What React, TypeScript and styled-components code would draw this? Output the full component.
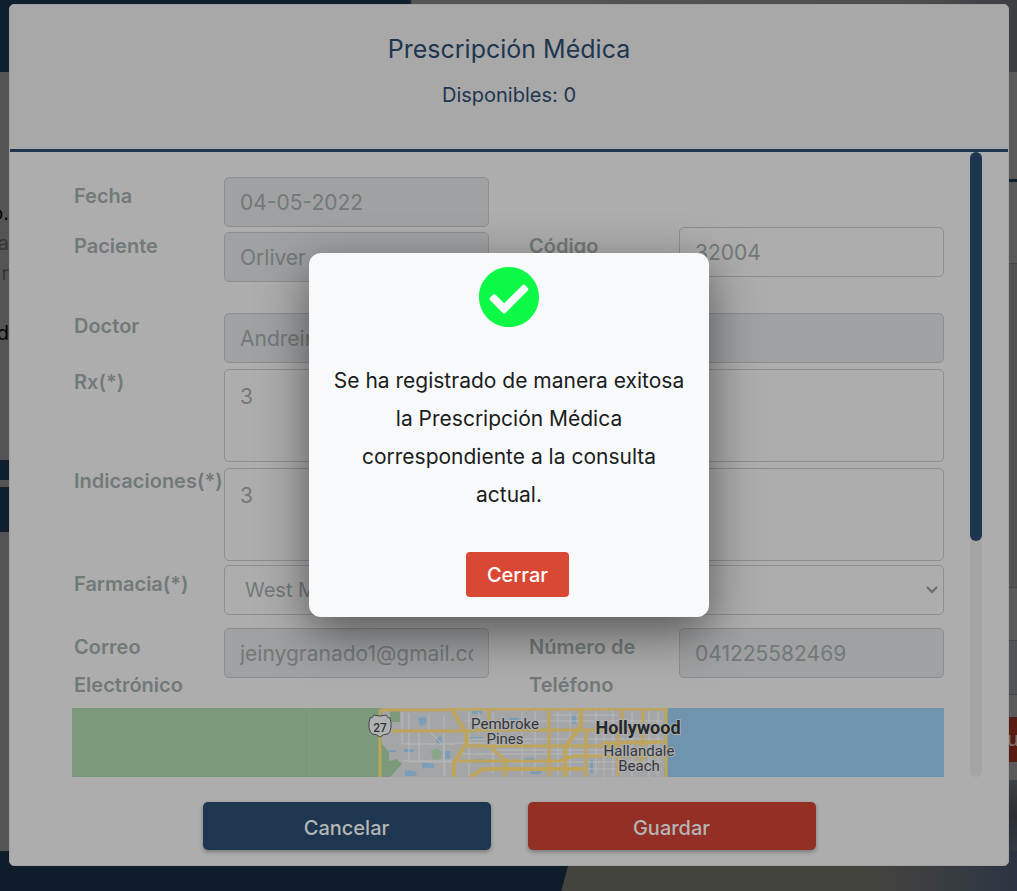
import React from "react";
import styled, { createGlobalStyle } from "styled-components";
import { FaCheckCircle } from "react-icons/fa";

const navy = "#1e364f";
const red = "#932f25";
const muted = "#717a79";
const line = "#8c8f92";

const GlobalStyle = createGlobalStyle`
  * { box-sizing: border-box; }
  body {
    margin: 0;
    font-family: Inter, "Noto Sans", sans-serif;
    font-size: 20px;
    background: #555555;
  }
  button, input, select, textarea { font: inherit; }
  h1, p { margin: 0; }
`;

/* Page behind the dialogs */

const Page = styled.div`
  display: grid;
  grid-template-rows: 72px 1fr 40px;
  height: 100vh;
  min-height: 891px;
  overflow: hidden;
`;

const PageTop = styled.header`
  background:
    linear-gradient(90deg, #101f2d 0 410px, transparent 412px),
    linear-gradient(90deg, #575553 0 50%, #4c4e50 90%, #3c3e41);
`;

const PageMain = styled.main`
  display: flex;
  justify-content: space-between;
  background: #545454;
`;

const PageBottom = styled.footer`
  background:
    linear-gradient(105deg, #0f1c29 0 552px, transparent 553px),
    linear-gradient(90deg, #44443f 0 86%, #373c42 94%, #2c3443);
`;

const LeftRail = styled.div`
  display: flex;
  flex-direction: column;
  width: 9px;
  padding-top: 126px;
  overflow: hidden;
`;

const RailText = styled.span<{ $soft?: boolean; $after?: number }>`
  display: flex;
  justify-content: flex-end;
  height: 30px;
  line-height: 30px;
  margin-bottom: ${(p) => p.$after ?? 0}px;
  color: ${(p) => (p.$soft ? "#343638" : "#050505")};
`;

const RailBlock = styled.div<{ $height: number }>`
  flex: none;
  height: ${(p) => p.$height}px;
  margin-bottom: 7px;
  background: #101f2d;
`;

const RightRail = styled.div`
  display: flex;
  flex-direction: column;
  width: 8px;
  background: #5a5a5a;
  overflow: hidden;
`;

const RailSection = styled.div<{ $height: number; $rule: string; $size?: number; $fill?: string }>`
  flex: none;
  height: ${(p) => p.$height}px;
  border-bottom: ${(p) => p.$size ?? 1}px solid ${(p) => p.$rule};
  background: ${(p) => p.$fill ?? "transparent"};
`;

const RailButton = styled.div`
  display: flex;
  justify-content: center;
  flex: none;
  height: 45px;
  line-height: 45px;
  margin: 22px 0 18px;
  background: #571c14;
  color: #85706d;
`;

const RailPhoto = styled.div`
  flex: 1;
  background: linear-gradient(#3e4244, #2b2e32 50%, #343a45);
`;

/* Prescription dialog */

const Layer = styled.div`
  position: absolute;
  inset: 0;
  padding: 4px 8px 25px 9px;
`;

const Dialog = styled.section`
  display: flex;
  flex-direction: column;
  background: #adadad;
  border: 1px solid #a2a2a2;
  border-radius: 5px;
`;

const DialogHeader = styled.header`
  padding: 21px 0 31px;
  background: #a8a8a8;
  border-bottom: 3px solid ${navy};
  border-radius: 4px 4px 0 0;
  color: ${navy};
  line-height: 46px;
  text-align: center;
`;

const Title = styled.h1`
  font-size: 25px;
  font-weight: 400;
`;

const DialogBody = styled.div`
  display: flex;
  gap: 26px;
  padding: 0 26px 0 62px;
`;

const Form = styled.form`
  flex: 1;
  padding-top: 25px;
`;

const ScrollTrack = styled.div`
  flex: none;
  width: 12px;
  height: 625px;
  border-radius: 6px;
  background: #a4a4a4;
`;

const ScrollThumb = styled.div`
  height: 389px;
  border-radius: 6px;
  background: ${navy};
`;

const Row = styled.div<{ $after?: number }>`
  display: grid;
  grid-template-columns: 1fr 1fr;
  gap: 38px;
  margin-bottom: ${(p) => p.$after ?? 0}px;
`;

const Field = styled.div<{ $wide?: boolean; $drop?: number }>`
  display: grid;
  grid-template-columns: 152px minmax(0, 1fr);
  align-items: start;
  grid-column: ${(p) => (p.$wide ? "1 / -1" : "auto")};

  > :last-child {
    margin-top: ${(p) => p.$drop ?? 0}px;
  }
`;

const Label = styled.label`
  padding-left: 2px;
  color: ${muted};
  font-weight: 600;
  line-height: 38px;
`;

const Input = styled.input`
  width: 100%;
  height: 50px;
  padding: 0 15px;
  border: 1px solid ${line};
  border-radius: 5px;
  background: #adadad;
  color: ${muted};
  font-size: 21px;
  outline: none;

  &:disabled {
    background: #9fa1a3;
    color: ${muted};
    opacity: 1;
  }
`;

const TextArea = styled.textarea`
  display: block;
  width: 100%;
  height: 93px;
  padding: 8px 15px;
  border: 1px solid ${line};
  border-radius: 5px;
  background: #adadad;
  color: ${muted};
  font-size: 21px;
  line-height: 38px;
  resize: none;
  outline: none;
`;

const SelectBox = styled.div`
  display: grid;
  align-items: center;

  > * {
    grid-area: 1 / 1;
  }

  svg {
    justify-self: end;
    margin-right: 6px;
    pointer-events: none;
  }
`;

const Select = styled.select`
  appearance: none;
  width: 100%;
  height: 50px;
  padding: 0 20px;
  border: 1px solid ${line};
  border-radius: 5px;
  background: #adadad;
  color: ${muted};
  outline: none;
`;

const MapView = styled.svg`
  display: block;
  width: 100%;
  height: 69px;
  font-family: Roboto, sans-serif;
`;

const DialogFooter = styled.footer`
  display: flex;
  justify-content: center;
  gap: 37px;
  padding: 25px 20px 15px;
`;

const ActionButton = styled.button<{ $color: string }>`
  flex: 0 1 288px;
  height: 48px;
  padding: 4px 6px 0;
  border: 0;
  border-radius: 5px;
  background: ${(p) => p.$color};
  color: #b4b6b8;
  font-weight: 500;
  box-shadow: 0 2px 4px rgba(0, 0, 0, 0.3);
`;

/* Confirmation */

const AlertLayer = styled.div`
  position: absolute;
  inset: 0;
  display: flex;
  align-items: center;
  justify-content: center;
  padding: 0 0 21px 1px;
`;

const Alert = styled.div`
  display: flex;
  flex-direction: column;
  align-items: center;
  width: 400px;
  padding: 13px 20px 20px;
  border-radius: 12px;
  background: #f8f9fb;
  box-shadow: 0 16px 48px rgba(0, 0, 0, 0.5);
`;

const AlertText = styled.p`
  margin: 34px 0 38px;
  color: #1b1d20;
  font-size: 21px;
  line-height: 38px;
  text-align: center;
`;

const AlertActions = styled.div`
  padding-left: 17px;
`;

const CloseButton = styled.button`
  width: 103px;
  height: 45px;
  padding: 0;
  border: 0;
  border-radius: 4px;
  background: #d94835;
  color: #ffffff;
  font-weight: 500;
`;

function CoastMap() {
  return (
    <MapView viewBox="0 0 872 69" preserveAspectRatio="xMidYMid slice" role="img" aria-label="Mapa">
      <rect x="-900" width="2672" height="69" fill="#7a9a7b" />
      <path d="M238 0V69" stroke="#82a083" />
      <path d="M300 0H596L592 69H317V44L310 36V0Z" fill="#a3a5a7" />
      <path d="M596 0H1772V69H595L594 40Z" fill="#7094ae" />
      <path d="M318 2h10v12h-10zM312 55l12-4 6 5-12 13h-6z" fill="#7a9a7b" />
      <path d="M359 43l6-3 5 4-1 7-8 1zM540 38h8v8h-8z" fill="#89a58a" />
      <g fill="#7b9db8">
        <path d="M346 10l8-1v7l-6 2zM332 41h10v3h-10zM364 31l5-3 1 7-5 2zM333 62l10 1 2 5h-12zM350 54l12 2v4h-12zM373 43h5v8h-5zM398 29h14v2h-14zM437 10h10v4h-10zM453 50h9v5h-9zM459 60h10v6h-10zM500 6h4v10h-4zM518 52h3v13h-3zM403 51h9v4h-9zM400 3h10v3h-10zM317 42h7v2h-7z" />
      </g>
      <g fill="none" stroke="#b7b8b8" strokeWidth="1">
        <path d="M330 4V36H383M337 5V54H386M347 25V53M357 5V23L372 38L373 68M372 8V68M383 35H460M397 4V68M407 4V25M421 5V65M450 4V67M463 3V64M486 3V67M498 3V67M524 3V67M532 20V69M541 2V69M560 2V69M577 3V69M586 3V69" />
        <path d="M393 13H590M399 31H590M390 46H592M430 54H590M440 61H590M330 53H380M481 7H545M420 42H590" />
      </g>
      <g fill="none" stroke="#bfa55b" strokeWidth="3">
        <path d="M308 2V69M308 2H375M320 23H395L407 22H594M396 38H544L552 34H592M386 53H488L502 48H592M417 2V38L433 52V69M477 0V69M514 22V69M550 0V15L546 26V68M571 0V45L565 62M594 0V69M375 1H594M530 35H585" />
        <path d="M379 0L394 25L395 34L382 55V69M509 0V18L493 39V69M398 69L411 61H512" strokeWidth="4" />
      </g>
      <path d="M298 10q3 0 4-3q6 2 12 0q1 3 4 3q3 11-2 16q-5 0-8 3q-3-3-8-3q-5-5-2-16z" fill="#b1b2b2" stroke="#45494d" strokeWidth="1" />
      <text x="308" y="24" textAnchor="middle" fontSize="12" fontWeight="500" fill="#303438">27</text>
      <g fill="#33373b" stroke="#acaeb0" strokeWidth="2" paintOrder="stroke" fontSize="15" textAnchor="middle">
        <text x="433" y="21">Pembroke</text>
        <text x="433" y="36">Pines</text>
        <text x="566" y="26" fontSize="18" fontWeight="700" fill="#25282b">Hollywood</text>
        <text x="567" y="48">Hallandale</text>
        <text x="567" y="63">Beach</text>
      </g>
    </MapView>
  );
}

export default function App() {
  return (
    <>
      <GlobalStyle />
      <Page aria-hidden="true">
        <PageTop />
        <PageMain>
          <LeftRail>
            <RailText>o.</RailText>
            <RailText $soft>la</RailText>
            <RailText $soft $after={30}>r</RailText>
            <RailText $after={112}>d</RailText>
            <RailBlock $height={20} />
            <RailBlock $height={45} />
          </LeftRail>
          <RightRail>
            <RailSection $height={110} $rule="#101f2d" $size={3} />
            <RailSection $height={82} $rule="#454647" />
            <RailSection $height={324} $rule="#454647" $fill="#525252" />
            <RailSection $height={53} $rule="#454647" />
            <RailSection $height={54} $rule="#454647" $fill="#515356" />
            <RailButton>u</RailButton>
            <RailPhoto />
          </RightRail>
        </PageMain>
        <PageBottom />
      </Page>

      <Layer>
        <Dialog role="dialog" aria-labelledby="title">
          <DialogHeader>
            <Title id="title">Prescripción Médica</Title>
            <p>Disponibles: 0</p>
          </DialogHeader>
          <DialogBody>
            <Form>
              <Row>
                <Field>
                  <Label htmlFor="fecha">Fecha</Label>
                  <Input id="fecha" defaultValue="04-05-2022" disabled />
                </Field>
              </Row>
              <Row $after={25}>
                <Field $drop={5}>
                  <Label htmlFor="paciente">Paciente</Label>
                  <Input id="paciente" defaultValue="Orliver" disabled />
                </Field>
                <Field>
                  <Label htmlFor="codigo">Código</Label>
                  <Input id="codigo" defaultValue="32004" />
                </Field>
              </Row>
              <Row>
                <Field $wide $drop={6}>
                  <Label htmlFor="doctor">Doctor</Label>
                  <Input id="doctor" defaultValue="Andreina" disabled />
                </Field>
              </Row>
              <Row>
                <Field $wide $drop={6}>
                  <Label htmlFor="rx">Rx(*)</Label>
                  <TextArea id="rx" defaultValue="3" />
                </Field>
              </Row>
              <Row $after={4}>
                <Field $wide $drop={6}>
                  <Label htmlFor="indicaciones">Indicaciones(*)</Label>
                  <TextArea id="indicaciones" defaultValue="3" />
                </Field>
              </Row>
              <Row $after={13}>
                <Field $wide>
                  <Label htmlFor="farmacia">Farmacia(*)</Label>
                  <SelectBox>
                    <Select id="farmacia">
                      <option>West Miami</option>
                    </Select>
                    <svg width="12" height="8" viewBox="0 0 12 8" fill="none" stroke="#656b6b" strokeWidth="2" aria-hidden="true">
                      <path d="M1 1l5 5 5-5" />
                    </svg>
                  </SelectBox>
                </Field>
              </Row>
              <Row $after={4}>
                <Field>
                  <Label htmlFor="correo">Correo Electrónico</Label>
                  <Input id="correo" defaultValue="jeinygranado1@gmail.com" disabled />
                </Field>
                <Field>
                  <Label htmlFor="telefono">Número de Teléfono</Label>
                  <Input id="telefono" defaultValue="041225582469" disabled />
                </Field>
              </Row>
              <CoastMap />
            </Form>
            <ScrollTrack>
              <ScrollThumb />
            </ScrollTrack>
          </DialogBody>
          <DialogFooter>
            <ActionButton type="button" $color={navy}>Cancelar</ActionButton>
            <ActionButton type="button" $color={red}>Guardar</ActionButton>
          </DialogFooter>
        </Dialog>
      </Layer>

      <AlertLayer>
        <Alert role="alertdialog" aria-describedby="message">
          <FaCheckCircle size={62} color="#0cf945" aria-hidden="true" />
          <AlertText id="message">
            Se ha registrado de manera exitosa la Prescripción Médica correspondiente a la consulta actual.
          </AlertText>
          <AlertActions>
            <CloseButton type="button">Cerrar</CloseButton>
          </AlertActions>
        </Alert>
      </AlertLayer>
    </>
  );
}
